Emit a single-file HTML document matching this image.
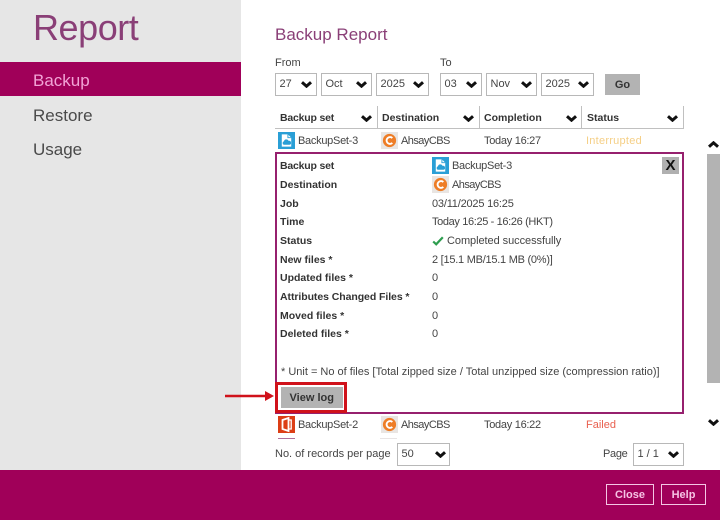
<!DOCTYPE html>
<html><head><meta charset="utf-8"><style>
html,body{margin:0;padding:0}
body{width:720px;height:520px;overflow:hidden;position:relative;background:#fff;font-family:"Liberation Sans",sans-serif;font-size:11px;color:#444}
.a{position:absolute}
.t{position:absolute;white-space:nowrap;line-height:16px;height:16px}
.b{font-weight:bold;color:#333;font-size:10.5px}
.n{letter-spacing:-.28px}
.m{letter-spacing:-.55px}
.s{position:absolute;box-sizing:border-box;border:1.5px solid #b8b8b8;height:23px;background:#fff;top:73px}
.s span{position:absolute;left:3.5px;top:3px;line-height:15px;font-size:11px}
svg.c{position:absolute}
.h{position:absolute;top:106px;height:23px;box-sizing:border-box;border-bottom:1.5px solid #c0c0c0;border-right:1.5px solid #c0c0c0}
</style></head><body>
<svg width="0" height="0" style="position:absolute"><defs>
<symbol id="ch" viewBox="0 0 11 7"><path d="M1 1.2L5.5 5.2L10 1.2" fill="none" stroke="#111" stroke-width="3"/></symbol>
<symbol id="up" viewBox="0 0 11 7"><path d="M1 5.8L5.5 1.8L10 5.8" fill="none" stroke="#111" stroke-width="3"/></symbol>
<symbol id="bk" viewBox="0 0 18 18"><rect width="18" height="18" fill="#2a9fd6"/><path d="M4 2.5H10.5L14 6V15.5H4Z" fill="#fff"/><path d="M10.5 2.5V6H14" fill="none" stroke="#2a9fd6"/><path d="M6 13.5a2 2 0 0 1 .3-3.7a2.6 2.6 0 0 1 4.9-.4a2.1 2.1 0 0 1 1 4.1Z" fill="#2a9fd6"/></symbol>
<symbol id="cb" viewBox="0 0 18 18"><rect width="18" height="18" fill="#e9e5e2"/><circle cx="9" cy="9" r="7" fill="#ee7d26"/><path d="M12 6.4A3.6 3.6 0 1 0 12 11.6" fill="none" stroke="#fff" stroke-width="2"/></symbol>
</defs></svg>

<div class="a" style="left:0;top:0;width:241px;height:470px;background:#e6e6e6"></div>
<div class="a" style="left:33px;top:5px;font-size:36px;line-height:46px;color:#8a3f77;white-space:nowrap;letter-spacing:-.45px">Report</div>
<div class="a" style="left:0;top:62px;width:241px;height:34px;background:#a00059"></div>
<div class="a" style="left:33px;top:69px;font-size:17px;line-height:24px;color:#f2a3d6">Backup</div>
<div class="a" style="left:33px;top:104px;font-size:17px;line-height:24px;color:#4a4a4a">Restore</div>
<div class="a" style="left:33px;top:138px;font-size:17px;line-height:24px;color:#4a4a4a">Usage</div>

<div class="a" style="left:275px;top:24px;font-size:17px;line-height:22px;color:#8a3f77;white-space:nowrap">Backup Report</div>

<div class="t" style="left:275px;top:55px">From</div>
<div class="t" style="left:440px;top:55px">To</div>

<div class="s" style="left:275px;width:42px"><span>27</span><svg class="c" style="left:24.5px;top:7px" width="11" height="7"><use href="#ch"/></svg></div>
<div class="s" style="left:321px;width:51px"><span>Oct</span><svg class="c" style="left:34px;top:7px" width="11" height="7"><use href="#ch"/></svg></div>
<div class="s" style="left:376px;width:53px"><span>2025</span><svg class="c" style="left:36px;top:7px" width="11" height="7"><use href="#ch"/></svg></div>
<div class="s" style="left:440px;width:42px"><span>03</span><svg class="c" style="left:24.5px;top:7px" width="11" height="7"><use href="#ch"/></svg></div>
<div class="s" style="left:486px;width:51px"><span>Nov</span><svg class="c" style="left:34px;top:7px" width="11" height="7"><use href="#ch"/></svg></div>
<div class="s" style="left:541px;width:53px"><span>2025</span><svg class="c" style="left:36px;top:7px" width="11" height="7"><use href="#ch"/></svg></div>
<div class="a" style="left:605px;top:74px;width:35px;height:21px;background:#b3b3b3;text-align:center;line-height:22px;font-weight:bold;color:#333">Go</div>

<div class="h" style="left:275px;width:103px"></div>
<div class="h" style="left:378px;width:102px"></div>
<div class="h" style="left:480px;width:102px"></div>
<div class="h" style="left:582px;width:102px"></div>
<div class="t b" style="left:280px;top:110px;letter-spacing:-.2px">Backup set</div>
<div class="t b" style="left:382px;top:110px">Destination</div>
<div class="t b" style="left:484px;top:110px">Completion</div>
<div class="t b" style="left:587px;top:110px">Status</div>
<svg class="c" style="left:361px;top:115px" width="11" height="7"><use href="#ch"/></svg>
<svg class="c" style="left:463px;top:115px" width="11" height="7"><use href="#ch"/></svg>
<svg class="c" style="left:566px;top:115px" width="11" height="7"><use href="#ch"/></svg>
<svg class="c" style="left:667px;top:115px" width="11" height="7"><use href="#ch"/></svg>

<svg class="c" style="left:278px;top:132px" width="17" height="17"><use href="#bk"/></svg>
<div class="t n" style="left:298px;top:133px">BackupSet-3</div>
<svg class="c" style="left:381px;top:132px" width="17" height="17"><use href="#cb"/></svg>
<div class="t m" style="left:401px;top:133px">AhsayCBS</div>
<div class="t n" style="left:484px;top:133px">Today 16:27</div>
<div class="t" style="left:586px;top:133px;color:#f5cf86;letter-spacing:.25px">Interrupted</div>

<div class="a" style="left:275px;top:152px;width:409px;height:262px;box-sizing:border-box;border:2px solid #96206e;background:#fff"></div>
<div class="a" style="left:662px;top:157px;width:17px;height:17px;background:#b0b0b0;text-align:center;font:bold 15px/18px 'Liberation Sans',sans-serif;color:#111">X</div>

<div class="t b" style="left:280px;top:158px;letter-spacing:-.2px">Backup set</div>
<div class="t b" style="left:280px;top:177px">Destination</div>
<div class="t b" style="left:280px;top:196px">Job</div>
<div class="t b" style="left:280px;top:214px">Time</div>
<div class="t b" style="left:280px;top:233px">Status</div>
<div class="t b" style="left:280px;top:252px">New files *</div>
<div class="t b" style="left:280px;top:270px">Updated files *</div>
<div class="t b" style="left:280px;top:289px;letter-spacing:-.07px">Attributes Changed Files *</div>
<div class="t b" style="left:280px;top:308px">Moved files *</div>
<div class="t b" style="left:280px;top:326px">Deleted files *</div>

<svg class="c" style="left:432px;top:157px" width="17" height="17"><use href="#bk"/></svg>
<div class="t n" style="left:452px;top:158px">BackupSet-3</div>
<svg class="c" style="left:432px;top:176px" width="17" height="17"><use href="#cb"/></svg>
<div class="t m" style="left:452px;top:177px">AhsayCBS</div>
<div class="t" style="left:432px;top:196px;letter-spacing:-.2px">03/11/2025 16:25</div>
<div class="t" style="left:432px;top:214px;letter-spacing:-.36px">Today 16:25 - 16:26 (HKT)</div>
<svg class="c" style="left:432px;top:236px" width="12" height="10"><path d="M1.2 5.5L4.2 8.3L10.8 1.2" fill="none" stroke="#2e9e4f" stroke-width="2.2"/></svg>
<div class="t" style="left:447px;top:233px;letter-spacing:-.06px">Completed successfully</div>
<div class="t" style="left:432px;top:252px;letter-spacing:-.25px">2 [15.1 MB/15.1 MB (0%)]</div>
<div class="t" style="left:432px;top:270px">0</div>
<div class="t" style="left:432px;top:289px">0</div>
<div class="t" style="left:432px;top:308px">0</div>
<div class="t" style="left:432px;top:326px">0</div>
<div class="t" style="left:281px;top:364px">* Unit = No of files [Total zipped size / Total unzipped size (compression ratio)]</div>

<div class="a" style="left:275px;top:382px;width:72px;height:31px;box-sizing:border-box;border:3px solid #d0121b;background:#fff"></div>
<div class="a" style="left:280.5px;top:387px;width:62.5px;height:21px;background:#b3b3b3;text-align:center;line-height:22px;font-weight:bold;color:#333">View log</div>
<svg class="c" style="left:225px;top:389px" width="50" height="14"><path d="M0 7H42" stroke="#d0121b" stroke-width="2.5"/><path d="M40 2L49 7L40 12Z" fill="#d0121b"/></svg>

<svg class="c" style="left:278px;top:415px" width="17" height="19" viewBox="0 0 17 19"><rect y="1" width="17" height="17" fill="#dc3e15"/><path d="M4.5 5L10.5 3V16L4.5 14Z" fill="none" stroke="#fff" stroke-width="1.8"/><path d="M10.5 5H13.2V14H10.5" fill="none" stroke="#fff" stroke-width="1.3"/></svg>
<div class="t n" style="left:298px;top:417px">BackupSet-2</div>
<svg class="c" style="left:381px;top:416px" width="17" height="17"><use href="#cb"/></svg>
<div class="t m" style="left:401px;top:417px">AhsayCBS</div>
<div class="t n" style="left:484px;top:417px">Today 16:22</div>
<div class="t" style="left:586px;top:417px;color:#e9604f">Failed</div>
<div class="a" style="left:278px;top:438px;width:17px;height:1px;background:#b0709c"></div>
<div class="a" style="left:380px;top:438px;width:17px;height:1px;background:#e8e4e4"></div>

<div class="a" style="left:707px;top:154px;width:13px;height:229px;background:#b3b3b3"></div>
<svg class="c" style="left:708px;top:141px" width="11" height="7"><use href="#up"/></svg>
<svg class="c" style="left:708px;top:419px" width="11" height="7"><use href="#ch"/></svg>

<div class="t" style="left:275px;top:446px">No. of records per page</div>
<div class="s" style="left:397px;top:443px;width:53px"><span>50</span><svg class="c" style="left:37px;top:7px" width="11" height="7"><use href="#ch"/></svg></div>
<div class="t" style="left:603px;top:446px;letter-spacing:-.3px">Page</div>
<div class="s" style="left:633px;top:443px;width:51px"><span>1 / 1</span><svg class="c" style="left:34px;top:7px" width="11" height="7"><use href="#ch"/></svg></div>

<div class="a" style="left:0;top:470px;width:720px;height:50px;background:#a00059"></div>
<div class="a" style="left:606px;top:484px;width:48px;height:21px;box-sizing:border-box;border:1.5px solid #f4c6e4;color:#f6c3e4;text-align:center;line-height:20px;font-weight:bold">Close</div>
<div class="a" style="left:661px;top:484px;width:45px;height:21px;box-sizing:border-box;border:1.5px solid #f4c6e4;color:#f6c3e4;text-align:center;line-height:20px;font-weight:bold">Help</div>
</body></html>
